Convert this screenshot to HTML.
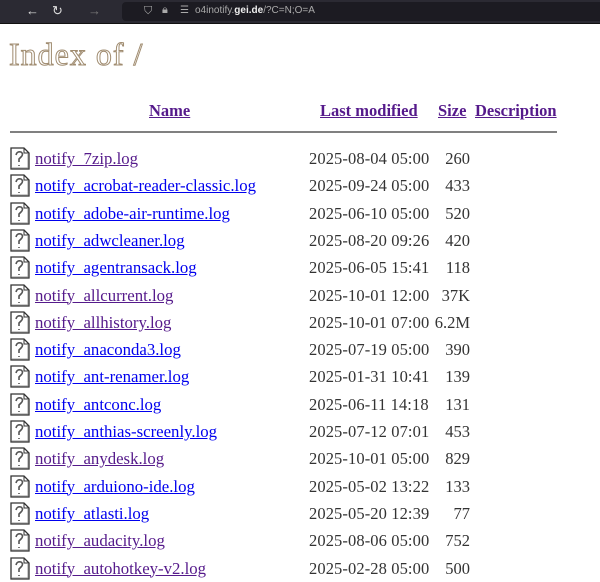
<!DOCTYPE html>
<html><head><meta charset="utf-8"><style>
body{margin:0;width:600px;height:571px;overflow:hidden;background:#fff;font-family:"Liberation Serif",serif;position:relative}
.bar{position:absolute;left:0;top:0;width:600px;height:23px;background:#2b2a33;border-bottom:1px solid #111}
.url{position:absolute;left:122px;top:2px;width:478px;height:19px;background:#1c1b22;border-radius:4px 0 0 4px}
.url span{position:absolute;left:73px;top:3px;font:10px "Liberation Sans",sans-serif;color:#aaa}
.url b{color:#eee;font-weight:bold}
.ic{position:absolute;color:#ddd;font:13px "Liberation Sans",sans-serif}
h1{position:absolute;left:9px;top:36px;margin:0;font-size:32px;font-weight:normal;color:#fff;-webkit-text-stroke:1px #a08c70;letter-spacing:1px}
.h{position:absolute;top:101px;font-size:16.5px;font-weight:bold;color:#551a8b;text-decoration:underline}
hr{position:absolute;left:10px;top:131px;width:547px;margin:0;border:0;border-top:2px solid #808080}
.r{position:absolute;left:0;height:27px;width:600px;font-size:16.5px;line-height:27px}
.r a{position:absolute;left:35px;color:#0000ee;text-decoration:underline;font-size:16.8px}
.r a.v{color:#551a8b}
.r .d{position:absolute;left:309px;color:#333;letter-spacing:.1px}
.r .s{position:absolute;right:130px;color:#333}
.r svg{position:absolute;left:10px;top:2px}
</style></head><body>
<div class="bar"><span class="ic" style="left:26px;top:3px">←</span><span class="ic" style="left:88px;top:3px;color:#777">→</span><span class="ic" style="left:52px;top:3px">&#x21bb;</span>
<div class="url"><span class="ic" style="left:22px;top:3px;font-size:11px">⛉</span><span class="ic" style="left:40px;top:2px;font-size:11px">🔒︎</span><span class="ic" style="left:58px;top:3px;font-size:10px">☰</span><span>o4inotify.<b>gei.de</b>/?C=N;O=A</span></div></div>
<h1>Index of /</h1>
<a class="h" style="left:149px">Name</a>
<a class="h" style="left:320px">Last modified</a>
<a class="h" style="left:438px">Size</a>
<a class="h" style="left:475px">Description</a>
<hr>
<div id="rows"></div>
<script>
const d=[["7zip","2025-08-04 05:00","260",1],["acrobat-reader-classic","2025-09-24 05:00","433"],["adobe-air-runtime","2025-06-10 05:00","520"],["adwcleaner","2025-08-20 09:26","420"],["agentransack","2025-06-05 15:41","118"],["allcurrent","2025-10-01 12:00","37K",1],["allhistory","2025-10-01 07:00","6.2M",1],["anaconda3","2025-07-19 05:00","390"],["ant-renamer","2025-01-31 10:41","139"],["antconc","2025-06-11 14:18","131"],["anthias-screenly","2025-07-12 07:01","453"],["anydesk","2025-10-01 05:00","829",1],["arduiono-ide","2025-05-02 13:22","133"],["atlasti","2025-05-20 12:39","77"],["audacity","2025-08-06 05:00","752",1],["autohotkey-v2","2025-02-28 05:00","500",1]];
const ic='<svg width="20" height="23" viewBox="0 0 20 23"><path d="M1 1H14L19 6V22H1Z" fill="#fff" stroke="#333" stroke-width="1.3"/><path d="M14 1V6H19" fill="none" stroke="#333"/><path d="M6 8Q7 4 11 5Q14 7 11 10L9 12V15M9 18V19" fill="none" stroke="#555" stroke-width="1.6"/><path d="M2 21H18M18 7V21" stroke="#999"/></svg>';
let h='';d.forEach((r,i)=>{h+=`<div class="r" style="top:${145+i*27.3}px">${ic}<a class="${r[3]?'v':''}">notify_${r[0]}.log</a><span class="d">${r[1]}</span><span class="s">${r[2]}</span></div>`});
document.getElementById('rows').innerHTML=h;
</script>
</body></html>
